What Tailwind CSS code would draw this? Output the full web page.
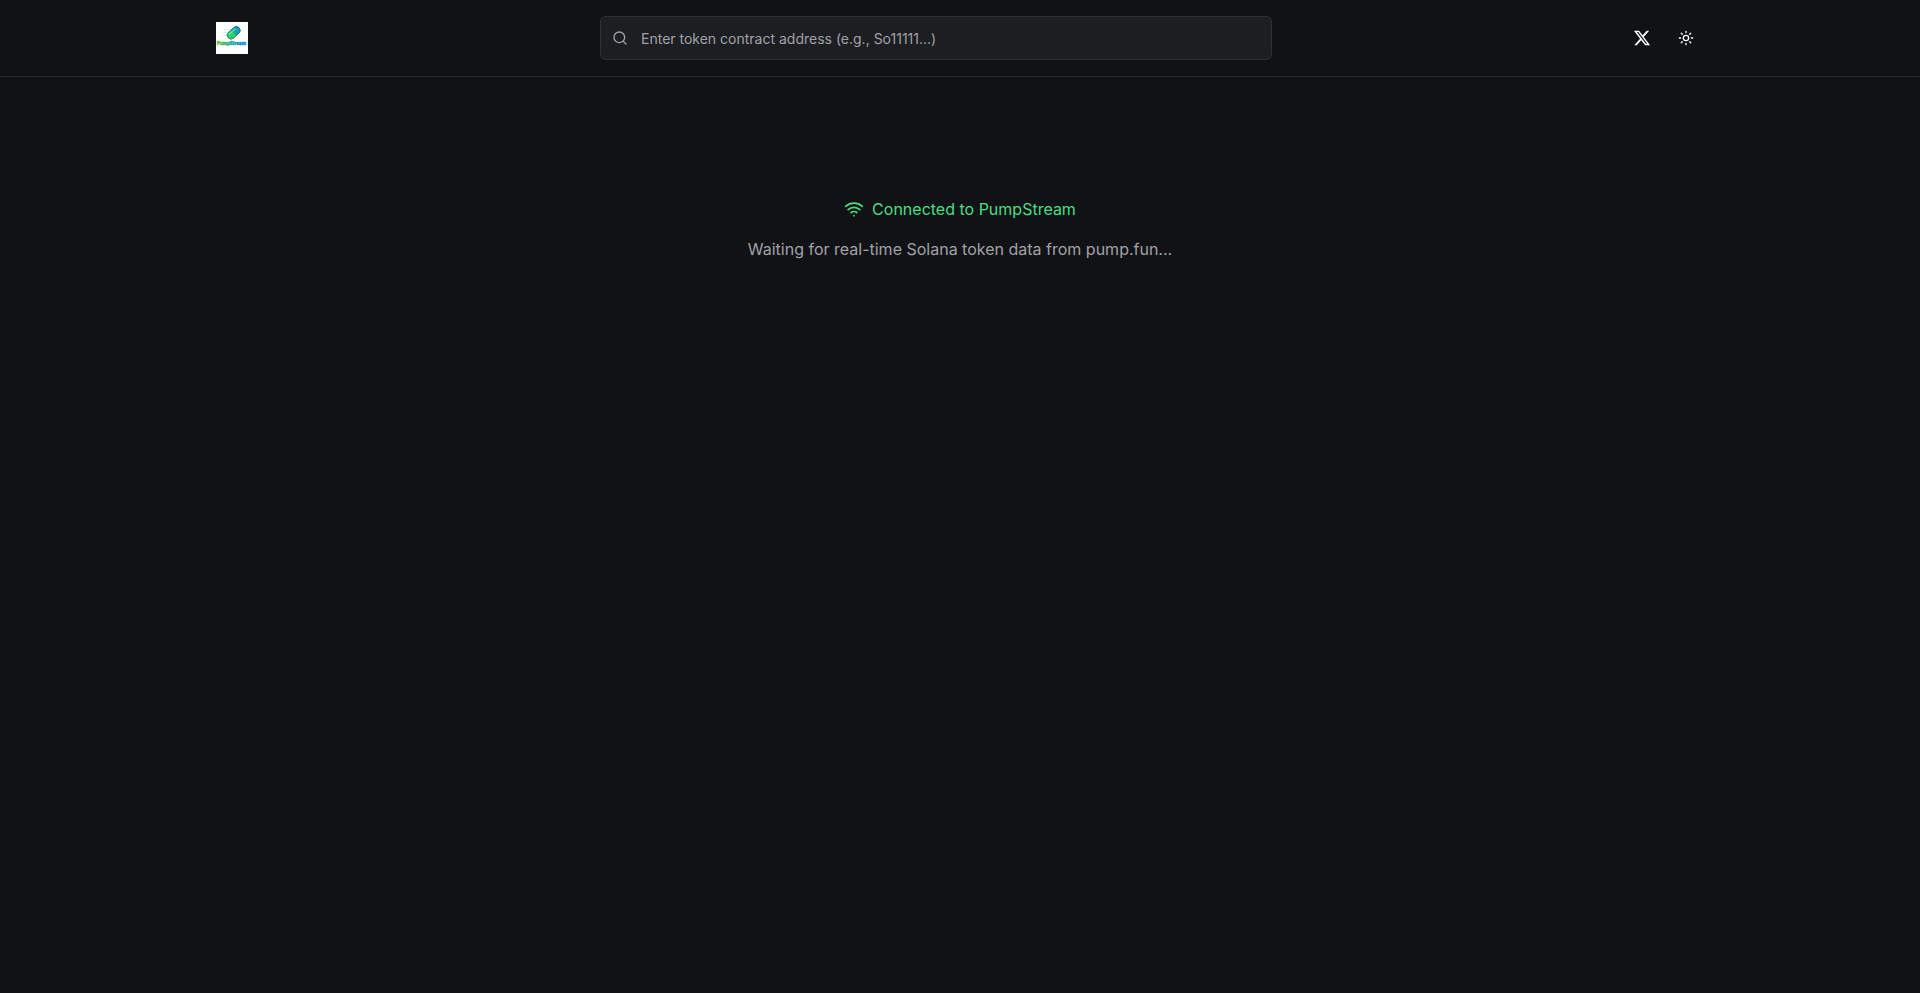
<!DOCTYPE html>
<html lang="en">
<head>
<meta charset="utf-8">
<meta name="viewport" content="width=device-width, initial-scale=1">
<title>PumpStream</title>
<script src="https://cdn.jsdelivr.net/npm/@tailwindcss/browser@4"></script>
</head>
<body class="min-h-screen bg-[#111216] font-['Inter',sans-serif] text-[#fafafa]">
<header class="border-b border-[#27282b]">
  <div class="mx-auto flex max-w-[1536px] items-center justify-between px-6 py-4">
    <a href="#" aria-label="PumpStream home" class="block size-8 shrink-0">
      <svg class="size-8" viewBox="0 0 32 32" role="img" aria-label="PumpStream">
        <defs>
          <linearGradient id="word" x1="0" x2="1"><stop offset="0" stop-color="#5cc52e"/><stop offset=".5" stop-color="#1ba58f"/><stop offset="1" stop-color="#1684d8"/></linearGradient>
        </defs>
        <path fill="#fff" d="M0 0h32v32H0z"/>
        <path d="M8 7.500h7M7 10.500h6M8 13.500h4" stroke="#b9e9e3" stroke-width=".7"/>
        <g transform="rotate(-42 17.700 10.800)">
          <rect x="10.300" y="7" width="14.800" height="7.600" rx="3.800" fill="#18a3b0" stroke="#125f6b" stroke-width=".8"/>
          <path d="M17.700 7.400h-3.600a3.400 3.400 0 0 0 0 6.800h3.600z" fill="#2fd45f"/>
          <path d="M13.700 9h7.500" stroke="#7ce8c0" stroke-width="1" stroke-linecap="round"/>
        </g>
        <text x="1" y="23" font-family="Inter, sans-serif" font-size="4.500" font-weight="800" fill="url(#word)" stroke="url(#word)" stroke-width=".4">PumpStream</text>
      </svg>
    </a>
    <form class="relative mx-4 w-full max-w-2xl" role="search">
      <svg class="pointer-events-none absolute top-1/2 left-3 size-4 -translate-y-1/2 text-[#a1a1aa]" viewBox="0 0 24 24" fill="none" stroke="currentColor" stroke-width="2" stroke-linecap="round" stroke-linejoin="round"><circle cx="11" cy="11" r="8"/><path d="m21 21-4.300-4.300"/></svg>
      <input type="text" aria-label="Token contract address" placeholder="Enter token contract address (e.g., So11111...)" class="block h-11 w-full rounded-md border border-[#303134] bg-[#1d1e22] pr-4 pl-10 text-sm text-[#fafafa] placeholder:text-[#a1a1a6]">
    </form>
    <div class="flex items-center gap-2">
      <a href="#" aria-label="X" class="flex size-9 items-center justify-center rounded-md">
        <svg class="size-[18px]" viewBox="0 0 24 24" fill="currentColor"><path d="M18.244 2.250h3.308l-7.227 8.260 8.502 11.240H16.170l-5.214-6.817L4.990 21.750H1.680l7.730-8.835L1.254 2.250H8.080l4.713 6.231zm-1.161 17.520h1.833L7.084 4.126H5.117z"/></svg>
      </a>
      <button type="button" aria-label="Toggle theme" class="flex size-9 items-center justify-center rounded-md">
        <svg class="size-4" viewBox="0 0 24 24" fill="none" stroke="currentColor" stroke-width="2" stroke-linecap="round" stroke-linejoin="round"><circle cx="12" cy="12" r="4"/><path d="M12 2v2M12 20v2M4.930 4.930l1.410 1.410M17.660 17.660l1.410 1.410M2 12h2M20 12h2M6.340 17.660l-1.410 1.410M19.070 4.930l-1.410 1.410"/></svg>
      </button>
    </div>
  </div>
</header>
<main class="mx-auto max-w-[1536px] px-6 pt-30 text-center">
  <p class="mb-4 flex items-center justify-center gap-2 text-[#4ade80]">
    <svg class="size-5" viewBox="0 0 24 24" fill="none" stroke="currentColor" stroke-width="2" stroke-linecap="round" stroke-linejoin="round"><path d="M12 20h.01M2 8.820a15 15 0 0 1 20 0M5 12.859a10 10 0 0 1 14 0M8.500 16.429a5 5 0 0 1 7 0"/></svg>
    <span>Connected to PumpStream</span>
  </p>
  <p class="text-[#a1a1a6]">Waiting for real-time Solana token data from pump.fun...</p>
</main>
</body>
</html>
